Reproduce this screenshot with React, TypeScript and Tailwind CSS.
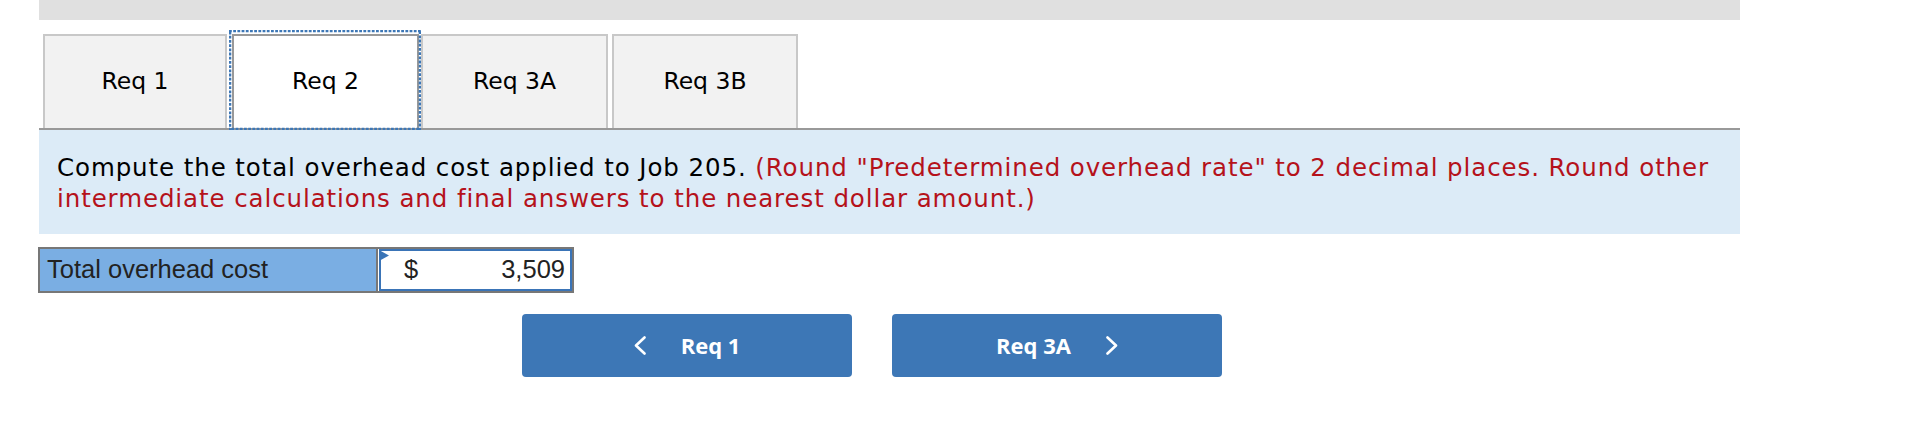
import React from "react";

const TAB = "DejaVu Sans, Verdana, sans-serif";

function Tab({ label, width, active, className = "" }: { label: string; width: string; active?: boolean; className?: string }) {
  return (
    <div
      className={`${width} ${className} h-[94px] flex items-center justify-center border-2 border-b-0 text-[23.5px] text-black ${
        active ? "bg-white border-[#999999]" : "bg-[#f2f2f2] border-[#c8c8c8]"
      }`}
      style={{ fontFamily: TAB }}
    >
      {label}
    </div>
  );
}

function Chevron({ dir }: { dir: "left" | "right" }) {
  return (
    <svg width="12" height="19" viewBox="0 0 12 19" fill="none">
      <polyline
        points={dir === "left" ? "10.5,1.5 2,9.5 10.5,17.5" : "1.5,1.5 10,9.5 1.5,17.5"}
        stroke="white"
        strokeWidth="2.6"
        strokeLinecap="round"
        strokeLinejoin="round"
      />
    </svg>
  );
}

export default function App() {
  return (
    <div className="w-full h-[427px] bg-white overflow-hidden">
      <div className="ml-[39px] w-[1701px]">
        <div className="h-[20px] bg-[#e0e0e0]" />

        <div className="mt-[10px] flex items-end pl-[4px] border-b-2 border-[#999999]">
          <Tab label="Req 1" width="w-[184px]" />
          {/* focused tab with dotted ring */}
          <div className="relative ml-[2px] -mb-[2px] pt-[4px] pl-[3px] pb-[2px] pr-[2px]">
            <Tab label="Req 2" width="w-[187px]" active />
            <svg className="absolute inset-0 w-full h-full pointer-events-none">
              <rect
                x="0"
                y="0"
                width="100%"
                height="100%"
                fill="none"
                stroke="#3d77b6"
                strokeWidth="4.6"
                strokeDasharray="2.8 1.4"
              />
            </svg>
          </div>
          <Tab label="Req 3A" width="w-[187px]" />
          <Tab label="Req 3B" width="w-[186px]" className="ml-[4px]" />
        </div>

        <div
          className="bg-[#dcebf7] pl-[18px] pr-[20px] pt-[22px] pb-[20px] text-[24.5px] leading-[31px] tracking-[0.9px] text-black"
          style={{ fontFamily: TAB }}
        >
          Compute the total overhead cost applied to Job 205.{" "}
          <span className="text-[#b5121b]">
            (Round "Predetermined overhead rate" to 2 decimal places. Round other intermediate calculations and final
            answers to the nearest dollar amount.)
          </span>
        </div>

        <div
          className="mt-[13px] -ml-[1px] flex w-[536px] h-[46px] border-2 border-[#777777] text-[25.5px] text-[#222222]"
          style={{ fontFamily: "Liberation Sans, Arial, sans-serif" }}
        >
          <div className="w-[338px] bg-[#7aaee3] border-r-2 border-[#777777] flex items-center pl-[7px] pb-[1px]">
            Total overhead cost
          </div>
          <div className="relative flex-1 bg-white pl-[1px]">
            <div className="h-full border-2 border-[#3a74b7] flex items-center justify-between pl-[23px] pr-[5px] pb-[1px]">
              <span>$</span>
              <span>3,509</span>
            </div>
            <svg className="absolute left-[1px] top-[1px]" width="10" height="12" viewBox="0 0 10 12">
              <polygon points="0,0 10,5.5 0,11" fill="#3a74b7" />
            </svg>
          </div>
        </div>

        <div
          className="mt-[21px] ml-[483px] flex gap-[40px] text-[22px] font-bold text-white"
          style={{ fontFamily: "Open Sans, Roboto, sans-serif" }}
        >
          <button className="w-[330px] h-[63px] rounded-[4px] bg-[#3d77b6] flex items-center justify-center gap-[35px]">
            <Chevron dir="left" />
            <span>Req 1</span>
          </button>
          <button className="w-[330px] h-[63px] rounded-[4px] bg-[#3d77b6] flex items-center justify-center gap-[35px]">
            <span>Req 3A</span>
            <Chevron dir="right" />
          </button>
        </div>
      </div>
    </div>
  );
}
